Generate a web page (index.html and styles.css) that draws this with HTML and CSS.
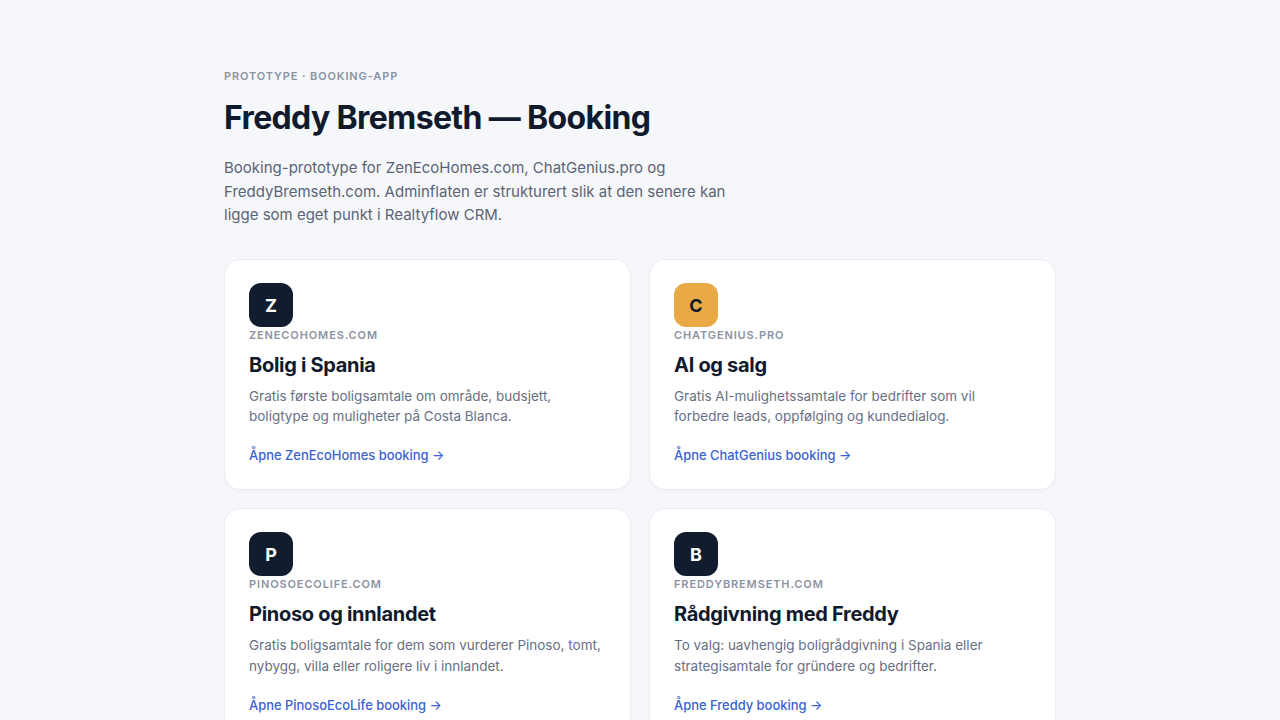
FILE: index.html
```html
<!DOCTYPE html>
<html lang="en">
<head>
    <meta charset="UTF-8">
    <meta name="viewport" content="width=device-width, initial-scale=1.0">
    <title>Freddy Bremseth — Booking</title>
    <link rel="stylesheet" href="styles.css">
</head>
<body>
    <main class="page">
        <p class="eyebrow">Prototype · booking-app</p>
        <h1 class="title">Freddy Bremseth — Booking</h1>
        <p class="lead">Booking-prototype for ZenEcoHomes.com, ChatGenius.pro og FreddyBremseth.com. Adminflaten er strukturert slik at den senere kan ligge som eget punkt i Realtyflow CRM.</p>
        <div class="cards">
            <article class="card">
                <div class="logo">Z</div>
                <p class="domain">zenecohomes.com</p>
                <h2 class="card-title">Bolig i Spania</h2>
                <p class="card-text">Gratis første boligsamtale om område, budsjett, boligtype og muligheter på Costa Blanca.</p>
                <a class="card-link" href="#">Åpne ZenEcoHomes booking →</a>
            </article>
            <article class="card">
                <div class="logo logo-amber">C</div>
                <p class="domain">chatgenius.pro</p>
                <h2 class="card-title">AI og salg</h2>
                <p class="card-text">Gratis AI-mulighetssamtale for bedrifter som vil forbedre leads, oppfølging og kundedialog.</p>
                <a class="card-link" href="#">Åpne ChatGenius booking →</a>
            </article>
            <article class="card">
                <div class="logo">P</div>
                <p class="domain">pinosoecolife.com</p>
                <h2 class="card-title">Pinoso og innlandet</h2>
                <p class="card-text">Gratis boligsamtale for dem som vurderer Pinoso, tomt, nybygg, villa eller roligere liv i innlandet.</p>
                <a class="card-link" href="#">Åpne PinosoEcoLife booking →</a>
            </article>
            <article class="card">
                <div class="logo">B</div>
                <p class="domain">freddybremseth.com</p>
                <h2 class="card-title">Rådgivning med Freddy</h2>
                <p class="card-text">To valg: uavhengig boligrådgivning i Spania eller strategisamtale for gründere og bedrifter.</p>
                <a class="card-link" href="#">Åpne Freddy booking →</a>
            </article>
        </div>
    </main>
</body>
</html>
```

FILE: styles.css
```css
* {
    box-sizing: border-box;
}

body {
    margin: 0;
    background-color: #f5f7fb;
    color: #111a2c;
    font-family: Inter, "Liberation Sans", sans-serif;
}

.page {
    max-width: 880px;
    margin: 0 auto;
    padding: 64px 24px;
}

.eyebrow {
    margin: 0 0 12px;
    font-size: 11px;
    line-height: 24px;
    font-weight: 600;
    letter-spacing: 0.08em;
    text-transform: uppercase;
    color: #8b93a1;
}

.title {
    margin: 0 0 20px;
    font-size: 32px;
    line-height: 36px;
    font-weight: 700;
    letter-spacing: -0.02em;
    color: #111a2c;
}

.lead {
    max-width: 520px;
    margin: 0 0 32px;
    font-size: 15px;
    line-height: 23.5px;
    color: #5b6472;
}

.cards {
    display: grid;
    grid-template-columns: 1fr 1fr;
    gap: 18px;
}

.card {
    padding: 23px 24px 24px;
    background-color: white;
    border: 1px solid #e9edf3;
    border-radius: 16px;
    box-shadow: 0 1px 3px rgba(17, 26, 44, 0.04);
}

.logo {
    display: flex;
    align-items: center;
    justify-content: center;
    width: 44px;
    height: 44px;
    padding-top: 1px;
    border-radius: 12px;
    background-color: #111c2e;
    color: white;
    font-size: 18px;
    font-weight: 700;
}

.logo-amber {
    background-color: #e9a944;
    color: #111a2c;
}

.domain {
    margin: 0 0 8px;
    font-size: 11px;
    line-height: 16px;
    font-weight: 600;
    letter-spacing: 0.08em;
    text-transform: uppercase;
    color: #8b93a1;
}

.card-title {
    margin: 0 0 7px;
    font-size: 20px;
    line-height: 28px;
    font-weight: 700;
    letter-spacing: -0.015em;
    color: #111a2c;
}

.card-text {
    margin: 0 0 18.15px;
    font-size: 13.5px;
    line-height: 1.55;
    color: #667085;
}

.card-link {
    display: block;
    font-size: 12.95px;
    line-height: 20px;
    font-weight: 500;
    color: #3b63d1;
    text-decoration: none;
}
```
